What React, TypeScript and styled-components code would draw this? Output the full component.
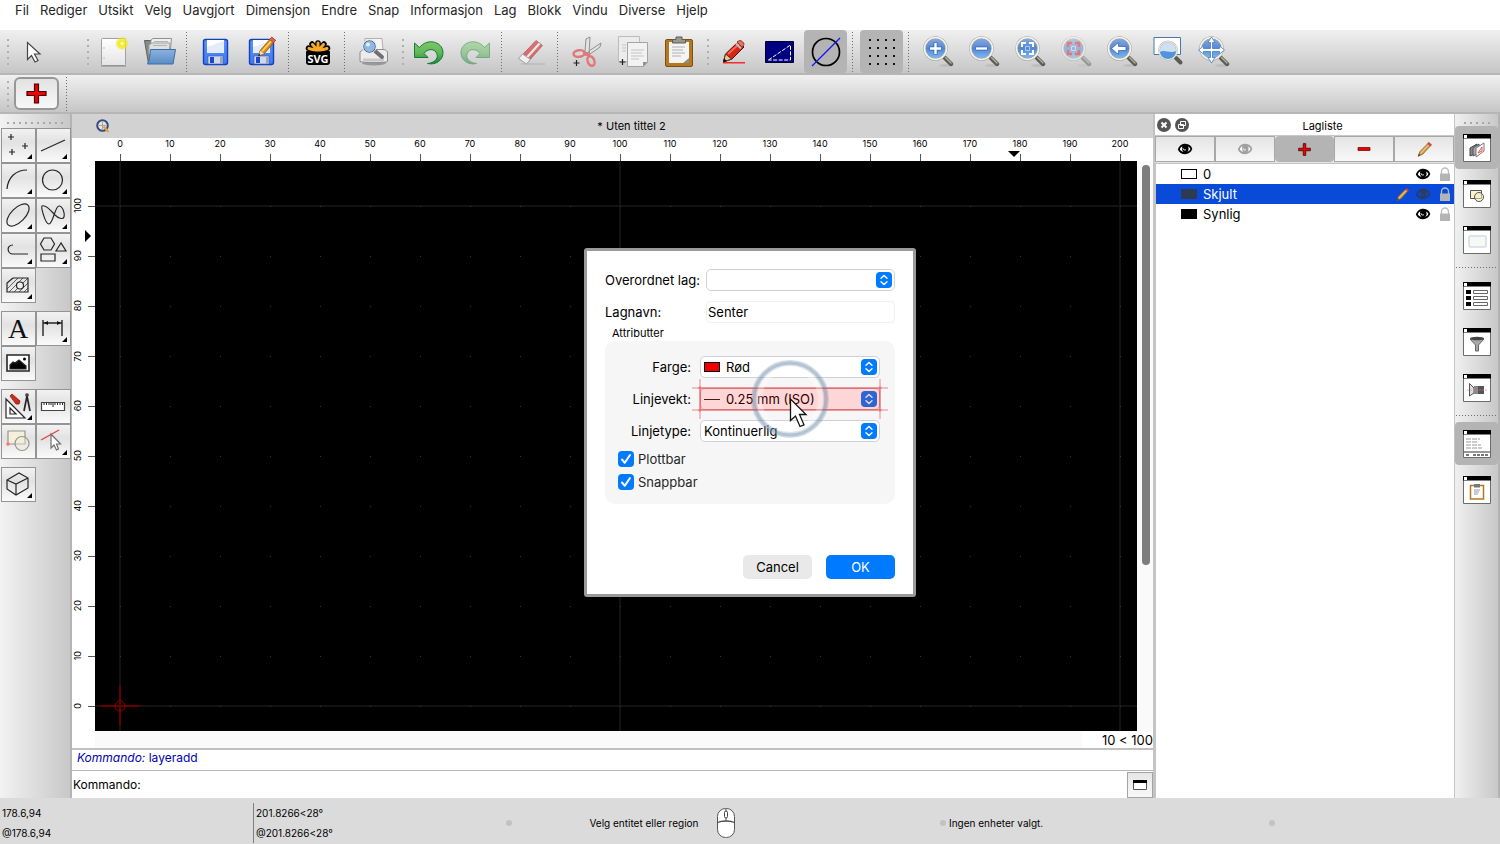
import React from "react";
import styled, { createGlobalStyle } from "styled-components";

const GlobalStyle = createGlobalStyle`
  * { box-sizing: border-box; }
  body {
    margin: 0;
    background: #fff;
    color: #000;
    font-family: Inter, "Liberation Sans", sans-serif;
    font-size: 13px;
    line-height: 16px;
  }
  button, input, select { font: inherit; color: inherit; margin: 0; }
  svg { display: block; flex: none; }
`;

/* ---------- Shell ---------- */

const Shell = styled.div`
  display: flex;
  flex-direction: column;
  min-height: 100vh;
`;

const MenuBar = styled.nav`
  display: flex;
  align-items: center;
  gap: 11px;
  height: 30px;
  padding: 0 15px 10px;
  background: #fff;
`;

const MenuButton = styled.button`
  padding: 0;
  border: 0;
  background: none;
  color: #262626;
  line-height: 20px;
`;

const ToolBar = styled.div<{ $height: number }>`
  display: flex;
  align-items: center;
  gap: 3px;
  height: ${(p) => p.$height}px;
  padding-left: 3px;
  background: linear-gradient(#f0f0f0, #c6c6c6);
  border-bottom: 2px solid #b6b6b6;
  overflow: hidden;
`;

const Grip = styled.span<{ $offset?: number }>`
  flex: none;
  width: 6px;
  height: 26px;
  margin-left: ${(p) => p.$offset ?? 0}px;
  background: repeating-linear-gradient(#b0b0b0 0 2px, transparent 2px 6px) right / 2px 100% no-repeat;
`;

const Divider = styled.span`
  flex: none;
  align-self: stretch;
  width: 7px;
  margin: 2px 0 1px;
  background: repeating-linear-gradient(#6e6e6e 0 1px, transparent 1px 3px) 2px 0 / 1px 100% no-repeat;
`;

const IconButton = styled.button<{ $active?: boolean }>`
  flex: none;
  display: flex;
  align-items: center;
  justify-content: center;
  width: 43px;
  height: 43px;
  padding: 0;
  border: 0;
  border-radius: 4px;
  background: ${(p) => (p.$active ? "#b4b4b4" : "none")};
`;

const FramedButton = styled(IconButton)`
  width: 45px;
  height: 33px;
  margin: 0 2px;
  border: 2px solid #979797;
  border-radius: 6px;
  background: linear-gradient(#e2e2e2, #f8f8f8);
`;

const Workspace = styled.main`
  flex: 1;
  display: flex;
  min-height: 0;
`;

/* ---------- Left tools ---------- */

const ToolPanel = styled.aside`
  flex: none;
  width: 72px;
  padding: 8px 1px 0;
  background: linear-gradient(90deg, #f2f2f2, #c8c8c8 97%, #b4b4b4 97%);
`;

const HorizontalGrip = styled.span<{ $width: number }>`
  display: block;
  width: ${(p) => p.$width}px;
  height: 2px;
  margin: 0 6px 4px;
  background: repeating-linear-gradient(90deg, #a8a8a8 0 2px, transparent 2px 6px);
`;

const ToolGroup = styled.div`
  display: grid;
  grid-template-columns: 35px 35px;
  grid-auto-rows: 35px;
  margin-bottom: 8px;
`;

const ToolButton = styled.button`
  position: relative;
  display: flex;
  align-items: center;
  justify-content: center;
  padding: 0;
  border: 1px solid #949494;
  background: linear-gradient(#f2f2f2, #e2e2e2 40%, #fafafa);
`;

const Corner = styled.span`
  position: absolute;
  right: 3px;
  bottom: 3px;
  border-left: 5px solid transparent;
  border-bottom: 5px solid #000;
`;

/* ---------- Document ---------- */

const DocumentPane = styled.section`
  flex: 1;
  min-width: 0;
  display: flex;
  flex-direction: column;
  border-right: 2px solid #c4c4c4;
`;

const DocumentTitle = styled.header`
  display: flex;
  align-items: center;
  height: 24px;
  padding-left: 24px;
  background: #d2d2d2;
`;

const TitleText = styled.h1`
  flex: 1;
  margin: 0;
  font-size: 11px;
  font-weight: 400;
  text-align: center;
`;

const TopRuler = styled.div`
  position: relative;
  display: flex;
  height: 23px;
  padding-left: 23px;
  background: #fff;
  overflow: hidden;
`;

const TopTick = styled.span`
  flex: none;
  display: flex;
  flex-direction: column;
  align-items: center;
  justify-content: space-between;
  width: 50px;
  font-size: 9px;
  line-height: 12px;
  &::after {
    content: "";
    width: 1px;
    height: 7px;
    margin-left: 1px;
    background: #555;
  }
`;

const DrawingRow = styled.div`
  flex: 1;
  display: flex;
  min-height: 0;
`;

const SideRuler = styled.div`
  position: relative;
  flex: none;
  display: flex;
  flex-direction: column;
  width: 23px;
  padding-top: 20px;
  background: #fff;
`;

const SideTick = styled.span`
  flex: none;
  display: flex;
  align-items: center;
  justify-content: space-between;
  height: 50px;
  font-size: 9px;
  line-height: 12px;
  &::after {
    content: "";
    width: 7px;
    height: 1px;
    margin-top: 1px;
    background: #555;
  }
`;

const SideLabel = styled.span`
  writing-mode: vertical-rl;
  rotate: 180deg;
`;

const TopMarker = styled.span`
  position: absolute;
  left: 936px;
  bottom: 4px;
  border: 6px solid transparent;
  border-bottom-width: 0;
  border-top-color: #000;
`;

const SideMarker = styled.span`
  position: absolute;
  top: 69px;
  right: 4px;
  border: 6px solid transparent;
  border-right-width: 0;
  border-left-color: #000;
`;

const Canvas = styled.div`
  position: relative;
  flex: 1;
  min-width: 0;
  background:
    linear-gradient(90deg, #121212 0 2px, transparent 2px) 24px 0 / 500px 100%,
    linear-gradient(#121212 0 2px, transparent 2px) 0 44px / 100% 500px,
    #000;
  overflow: hidden;
`;

const CanvasDrawing = styled.svg`
  position: absolute;
  inset: 0;
  width: 100%;
  height: 100%;
`;

const ScrollTrack = styled.div`
  flex: none;
  width: 16px;
  padding: 4px 3px 0 5px;
  background: #fafafa;
`;

const ScrollThumb = styled.div`
  height: calc(71% - 2px);
  border-radius: 4px;
  background: #7d7d7d;
`;

const CanvasFooter = styled.div`
  display: flex;
  justify-content: flex-end;
  height: 17px;
  margin-left: 23px;
  background: #fafafa;
`;

const GridInfo = styled.span`
  width: 71px;
  background: #fff;
  line-height: 18px;
  text-align: right;
`;

const CommandLog = styled.div`
  height: 23px;
  padding: 0 5px;
  border-top: 2px solid #c0c0c0;
  border-bottom: 1px solid #b8b8b8;
  color: #0000b4;
  font-size: 12px;
  line-height: 16px;
`;

const CommandRow = styled.div`
  display: flex;
  align-items: center;
  height: 27px;
  padding-left: 1px;
  font-size: 12px;
`;

const CommandInput = styled.input`
  flex: 1;
  min-width: 0;
  height: 24px;
  border: 0;
  outline: 0;
  background: transparent;
`;

const CommandButton = styled(IconButton)`
  width: 26px;
  height: 26px;
  border: 1px solid #a4a4a4;
  border-radius: 0;
  background: linear-gradient(#e6e6e6, #f8f8f8);
`;

/* ---------- Layer list ---------- */

const LayerPanel = styled.section`
  flex: none;
  display: flex;
  flex-direction: column;
  width: 300px;
  border-right: 1px solid #c4c4c4;
  background: #fff;
`;

const LayerHeader = styled.header`
  display: flex;
  align-items: center;
  gap: 4px;
  height: 21px;
  padding: 0 2px;
`;

const RoundButton = styled.button`
  display: flex;
  padding: 0;
  border: 0;
  background: none;
`;

const LayerTitle = styled.h2`
  flex: 1;
  margin: 2px 0 0;
  font-size: 11px;
  font-weight: 400;
  text-align: center;
`;

const LayerActions = styled.div`
  display: grid;
  grid-template-columns: repeat(5, 1fr);
  height: 28px;
  padding-bottom: 1px;
  border-top: 1px solid #c8c8c8;
  background: #e4e4e4;
`;

const LayerAction = styled.button<{ $active?: boolean }>`
  display: flex;
  align-items: center;
  justify-content: center;
  padding: 0;
  border: 1px solid ${(p) => (p.$active ? "#b4b4b4" : "#a8a8a8")};
  border-radius: ${(p) => (p.$active ? 4 : 0)}px;
  background: ${(p) => (p.$active ? "#b4b4b4" : "linear-gradient(#e4e4e4, #f8f8f8)")};
`;

const LayerRows = styled.ul`
  flex: 1;
  margin: 0;
  padding: 0;
  border-top: 1px solid #c4c4c4;
  border-left: 1px solid #c4c4c4;
  list-style: none;
`;

const LayerRow = styled.li<{ $selected?: boolean }>`
  display: flex;
  align-items: center;
  height: 20px;
  padding-left: 25px;
  background: ${(p) => (p.$selected ? "#094bd8" : "transparent")};
  color: ${(p) => (p.$selected ? "#fff" : "#000")};
`;

const Swatch = styled.span<{ $fill: string; $line?: string }>`
  flex: none;
  width: 16px;
  height: 10px;
  border: 1px solid ${(p) => p.$line ?? "#000"};
  background: ${(p) => p.$fill};
`;

const LayerName = styled.span`
  flex: 1;
  padding-left: 6px;
`;

const RowButton = styled.button<{ $width: number }>`
  display: flex;
  justify-content: center;
  width: ${(p) => p.$width}px;
  padding: 0;
  border: 0;
  background: none;
`;

/* ---------- Right dock ---------- */

const Dock = styled.aside`
  flex: none;
  display: flex;
  flex-direction: column;
  align-items: center;
  gap: 3px;
  width: 45px;
  padding: 8px 2px 0 0;
  background: linear-gradient(90deg, #f0f0f0, #c8c8c8 95%, #b4b4b4 95%);
`;

const DockGrip = styled(HorizontalGrip)`
  margin: 0 0 -1px;
`;

const DockDivider = styled.span`
  width: 41px;
  height: 7px;
  background: repeating-linear-gradient(90deg, #6e6e6e 0 1px, transparent 1px 3px) center / 100% 1px no-repeat;
`;

/* ---------- Status bar ---------- */

const StatusBar = styled.footer`
  display: grid;
  grid-template-columns: 253fr 253fr 434fr 329fr 231fr;
  align-items: center;
  height: 46px;
  padding-top: 3px;
  background: #dbdbdb;
  font-size: 10px;
  line-height: 20px;
`;

const Coordinates = styled.div<{ $divided?: boolean }>`
  height: 40px;
  padding-left: 2px;
  border-left: ${(p) => (p.$divided ? "1px solid #808080" : "0")};
`;

const StatusField = styled.div`
  display: flex;
  align-items: center;
  gap: 3px;
`;

const MouseHint = styled.div`
  flex: 1;
  display: grid;
  grid-template-columns: 1fr auto 1fr;
  align-items: center;
  gap: 18px;
  padding-right: 4px;
  text-align: right;
`;

const Dot = styled.span`
  flex: none;
  width: 6px;
  height: 6px;
  border-radius: 3px;
  background: #c2c2c2;
`;

/* ---------- Dialog ---------- */

const DialogLayer = styled.div`
  position: fixed;
  inset: 0;
  display: flex;
  align-items: center;
  justify-content: center;
`;

const Dialog = styled.form`
  width: 332px;
  padding: 18px 18px 15px;
  border: 3px solid #9a9a9a;
  border-radius: 3px;
  background: #fff;
`;

const Field = styled.div`
  display: flex;
  align-items: center;
  height: 22px;
  margin-bottom: 10px;
`;

const FieldLabel = styled.label<{ $width: number; $right?: boolean }>`
  flex: none;
  width: ${(p) => p.$width}px;
  padding-right: ${(p) => (p.$right ? 9 : 0)}px;
  text-align: ${(p) => (p.$right ? "right" : "left")};
  white-space: nowrap;
`;

const SelectBox = styled.span`
  position: relative;
  flex: 1;
  display: flex;
`;

const Select = styled.select<{ $icon?: boolean }>`
  appearance: none;
  width: 100%;
  height: 22px;
  padding: 0 28px 0 ${(p) => (p.$icon ? 25 : 3)}px;
  border: 1px solid #cdd2da;
  border-radius: 5px;
  background: #fff;
  outline: 0;
`;

const SelectMark = styled.span`
  position: absolute;
  top: 0;
  bottom: 0;
  left: 4px;
  display: flex;
  align-items: center;
  pointer-events: none;
`;

const SelectArrows = styled.span`
  position: absolute;
  top: 3px;
  right: 3px;
  pointer-events: none;
`;

const NameInput = styled.input`
  flex: 1;
  min-width: 0;
  height: 22px;
  padding: 0 1px;
  border: 1px solid #f0f0f0;
  border-radius: 4px;
  background: #fff;
  outline: 0;
`;

const Attributes = styled.fieldset`
  margin: -8px 0 0;
  padding: 0;
  border: 0;
`;

const Legend = styled.legend`
  padding: 0 7px;
  font-size: 11px;
`;

const AttributeCard = styled.div`
  padding: 15px 15px 14px 13px;
  border-radius: 10px;
  background: #f6f6f6;
`;

const CheckList = styled.div`
  display: grid;
  gap: 7px;
  margin-top: -1px;
`;

const CheckRow = styled.label`
  display: flex;
  align-items: center;
  gap: 4px;
  height: 16px;
  color: #262626;
`;

const CheckBoxFrame = styled.span`
  position: relative;
  display: flex;
`;

const CheckBox = styled.input`
  appearance: none;
  width: 16px;
  height: 16px;
  margin: 0;
  border-radius: 4px;
  background: #007aff;
`;

const CheckMark = styled.svg`
  position: absolute;
  inset: 0;
  pointer-events: none;
`;

const DialogActions = styled.div`
  display: flex;
  justify-content: flex-end;
  gap: 14px;
  margin-top: 51px;
`;

const DialogButton = styled.button<{ $primary?: boolean }>`
  width: 69px;
  height: 24px;
  padding: 0;
  border: 0;
  border-radius: 5px;
  background: ${(p) => (p.$primary ? "#007aff" : "#e9e9e9")};
  color: ${(p) => (p.$primary ? "#fff" : "#000")};
`;

const FocusMarker = styled.svg`
  position: absolute;
  z-index: 1;
  left: 50%;
  top: 50%;
  translate: -50% -50%;
  pointer-events: none;
`;

/* ---------- Icons ---------- */

type IconProps = { size?: number; children: React.ReactNode; box?: number; opacity?: number };
const Icon = ({ size = 32, box, children, opacity }: IconProps) => (
  <svg width={size} height={size} viewBox={`0 0 ${box ?? size} ${box ?? size}`} fill="none" opacity={opacity} aria-hidden="true">
    {children}
  </svg>
);

const HiddenSvg = styled.svg`
  position: absolute;
`;

const Defs = () => (
  <HiddenSvg width="0" height="0" aria-hidden="true">
    <defs>
      <radialGradient id="glow">
        <stop offset="0" stopColor="#fffff0" />
        <stop offset=".35" stopColor="#f4ec20" />
        <stop offset=".7" stopColor="#f0e820" stopOpacity=".7" />
        <stop offset="1" stopColor="#f0e820" stopOpacity="0" />
      </radialGradient>
      <linearGradient id="paper" x2="0" y2="1">
        <stop stopColor="#fff" />
        <stop offset="1" stopColor="#e4e4e4" />
      </linearGradient>
      <linearGradient id="folder" x2="0" y2="1">
        <stop stopColor="#8cb2de" />
        <stop offset="1" stopColor="#5a8cc4" />
      </linearGradient>
      <linearGradient id="disk" x2="0" y2="1">
        <stop stopColor="#5c94f4" />
        <stop offset="1" stopColor="#4078f0" />
      </linearGradient>
      <linearGradient id="lens" x2="0" y2="1">
        <stop stopColor="#8cace0" />
        <stop offset=".5" stopColor="#5488d4" />
        <stop offset="1" stopColor="#80c0f8" />
      </linearGradient>
      <linearGradient id="green" x2="0" y2="1">
        <stop stopColor="#7cc868" />
        <stop offset=".5" stopColor="#60b858" />
        <stop offset="1" stopColor="#10883c" />
      </linearGradient>
    </defs>
  </HiddenSvg>
);

const Pointer = () => (
  <path d="M9.500 6.500v17l4-4 3.500 6.500 3-1.500-3.500-6.500H22Z" fill="#fff" stroke="#444" strokeWidth="1.200" />
);

const DiskShape = () => (
  <>
    <rect x="3.500" y="3.500" width="24" height="25" rx="2" fill="url(#disk)" stroke="#1440c0" strokeWidth="1.400" />
    <rect x="7" y="4" width="17" height="13" fill="#fff" />
    <path d="M7 17V11L24 5v12Z" fill="#e4ecfa" />
    <path d="M8 28v-8h15v8Z" fill="#d4d8e4" stroke="#3058c8" strokeWidth=".6" />
    <rect x="10" y="21" width="4" height="6" fill="#1848c8" />
    <path d="M20 21h3v7h-3Z" fill="#98a4c0" />
  </>
);

const UndoShape = () => (
  <path
    d="M1.500 9V23.500H15L11 19.500C14 14.500 22 14 24 20C25.500 25 21 29 14.500 29.500C23 31.500 30.500 26 30 18C29 7 14 4 6.500 13.500Z"
    fill="url(#green)" stroke="#187c34" strokeWidth="1"
  />
);

const ZoomShape = ({ children, muted }: { children: React.ReactNode; muted?: boolean }) => (
  <Icon opacity={muted ? 0.5 : 1}>
    <ellipse cx="24" cy="29.500" rx="7" ry="1.500" fill="#000" opacity=".08" />
    <path d="m20 19 3 3" stroke="#a8a8a0" strokeWidth="2" />
    <path d="m23 22 6 6" stroke="#5c5c54" strokeWidth="4.400" strokeLinecap="round" />
    <path d="m23.500 21.500 5.500 5.500" stroke="#b0b0a4" strokeWidth="1.400" strokeLinecap="round" />
    <circle cx="13.500" cy="12.500" r="11" fill="url(#lens)" stroke="#a8a8a0" strokeWidth="2.600" />
    <circle cx="13.500" cy="12.500" r="11" stroke="#f4f4ec" strokeWidth="1.600" />
    {children}
  </Icon>
);

const PencilShape = () => (
  <>
    <path d="m7 28 3-8L25 3l5 4-15 18Z" fill="#e08818" stroke="#884c08" />
    <path d="m12 22 15-17" stroke="#fcd458" strokeWidth="2.500" />
    <path d="m22 6 3-3 5 4-3 3Z" fill="#e86050" stroke="#9c4038" />
    <path d="m7 28 3-8 5 5Z" fill="#f8dca8" stroke="#946c40" strokeWidth=".7" />
    <path d="m7 28 1-3 2 2Z" fill="#000" />
  </>
);

const Eye = ({ color = "#000", shine = "#fff" }: { color?: string; shine?: string }) => (
  <svg width="16" height="12" viewBox="0 0 16 12" fill="none" aria-hidden="true">
    <path d="M.8 6.400C2.400 2.200 5 .7 8.400.7c3.600 0 6 2.100 6.900 5.300-1.300 3.200-3.800 5.200-7.300 5.200C4.500 11.200 2.300 9.500.8 6.400Z" fill={color} />
    <path d="M2.800 6.300C3.400 4.700 4.400 3.700 5.400 3.300 4.600 5.500 5 7.600 6.600 9 4.800 8.700 3.600 7.800 2.800 6.300ZM10.300 8.900c1.300-1.300 1.700-3.500.8-5.400 1.300.7 2 1.500 2.300 2.600-.6 1.300-1.700 2.300-3.100 2.800Z" fill={shine} />
    <path d="M5.900 5.200c.4 1.700 1.500 2.200 3 1.600" stroke={shine} strokeWidth="1" />
  </svg>
);

const Lock = () => (
  <svg width="12" height="14" viewBox="0 0 12 14" fill="none" aria-hidden="true">
    <path d="M2.500 7V4.500a3.500 3.500 0 0 1 7 0V7" stroke="#b8bcc4" strokeWidth="1.300" />
    <path d="M1 6.500h10V14H1Z" fill="#b4b4b4" />
  </svg>
);

const SmallPencil = ({ size = 20 }: { size?: number }) => (
  <Icon size={size} box={20}>
    <path d="m2.500 18 2-5.500L14.500 2.500l3 2.500L8 15.500Z" fill="#d49a48" stroke="#80602c" strokeWidth=".9" />
    <path d="m5.500 14.500 10-10.500" stroke="#f4cc7c" strokeWidth="1.200" />
    <path d="m13.500 3.500 1.500-2 3.500 3-1.500 1.500Z" fill="#e04840" stroke="#a84034" strokeWidth=".6" />
    <path d="m2.500 18 1-3L5 16.500Z" fill="#403020" />
  </Icon>
);

const Cross = ({ size }: { size: number }) => (
  <Icon size={size} box={21}>
    <path d="M8.500 1h4v7.500H20v4h-7.500V20h-4v-7.500H1v-4h7.500Z" fill="#f00000" stroke="#400000" strokeWidth="1.200" />
  </Icon>
);

const ToolIcon = ({ children }: { children: React.ReactNode }) => (
  <svg width="33" height="33" viewBox="0 0 33 33" fill="none" stroke="#262626" strokeWidth="1.200" aria-hidden="true">
    {children}
  </svg>
);

const Arrows = () => (
  <svg width="16" height="16" viewBox="0 0 16 16" fill="none" aria-hidden="true">
    <rect width="16" height="16" rx="4" fill="#007aff" />
    <path d="m5 6.300 3-2.800 3 2.800M5 9.700l3 2.800 3-2.800" stroke="#fff" strokeWidth="1.400" strokeLinecap="round" strokeLinejoin="round" />
  </svg>
);

const DockIcon = ({ children }: { children: React.ReactNode }) => (
  <Icon size={28}>
    <path d="M.500.500h27v27H.500Z" fill="#fff" stroke="#6c6c6c" />
    <path d="M0 0h28v4.500H0Z" fill="#000" />
    <path d="M1 1h3v3H1Z" fill="#fff" />
    {children}
  </Icon>
);

const Clipboard = ({ size = 32 }: { size?: number }) => (
  <Icon size={size} box={32}>
    <rect x="2.500" y="3.500" width="27" height="27" rx="1.500" fill="#b47820" stroke="#7c5010" />
    <path d="M6 6h20v21H6Z" fill="#f4f4f4" />
    <path d="M26 22v5h-6Z" fill="#8c8c8c" />
    <path d="M9 11h13M9 14h11M9 17h13M9 20h9" stroke="#b0b0b0" />
    <path d="M9.500 7V3.500H13V1h6v2.500h3.500V7Z" fill="#98988c" stroke="#5c5c54" />
  </Icon>
);

/* ---------- Toolbar contents ---------- */

type Tool = { label: string; icon: React.ReactNode; active?: boolean };
type ToolbarEntry = Tool | "divider" | "grip";

const toolbar: ToolbarEntry[] = [
  {
    label: "Ny",
    icon: (
      <Icon>
        <rect x="3.500" y="2.500" width="24" height="27" rx="1" fill="url(#paper)" stroke="#a0a0a0" />
        <path d="M3 30h25" stroke="#888" />
        <path d="M5 12h2M5 22h2" stroke="#c0c0c0" />
        <circle cx="24" cy="7.500" r="7" fill="url(#glow)" />
      </Icon>
    ),
  },
  {
    label: "Åpne",
    icon: (
      <Icon>
        <path d="M.500 4.500h8l2 3v20H4.500Z" fill="#888c88" stroke="#5c605c" />
        <path d="m7 4 2-1.500h18.500L26 18H6Z" fill="#f0f0f0" stroke="#909090" />
        <path d="m5 9 3-2h18l-1 11H5Z" fill="#e0e0e0" stroke="#a0a0a0" />
        <path d="M10 5.500h14M9 9.500h14" stroke="#b4b4b4" />
        <path d="M6.500 13.500h25L29 28H3.500c2-3 2.500-9 3-14.500Z" fill="url(#folder)" stroke="#3c6ca4" />
      </Icon>
    ),
  },
  "divider",
  { label: "Lagre", icon: <Icon><DiskShape /></Icon> },
  {
    label: "Lagre som",
    icon: (
      <Icon>
        <DiskShape />
        <g transform="translate(7 -1) scale(.75)"><PencilShape /></g>
      </Icon>
    ),
  },
  "divider",
  {
    label: "SVG",
    icon: (
      <Icon>
        <path d="M16 15 6.500 12M16 15 10 8M16 15V7M16 15l6-7M16 15l9.500-3" stroke="#000" strokeWidth="5.500" strokeLinecap="round" />
        <rect x="4" y="14" width="24" height="15" rx="3" fill="#000" />
        <path d="M16 15 7 12.500M16 15 10.500 8.500M16 15V7M16 15l5.500-6.500M16 15l9-2.500" stroke="#f8a828" strokeWidth="3" strokeLinecap="round" />
        <path d="M4 15.500h24V27H4Z" fill="#000" />
        <text x="16" y="27" fill="#fff" fontFamily="Open Sans, sans-serif" fontSize="11" fontWeight="700" textAnchor="middle">SVG</text>
      </Icon>
    ),
  },
  "divider",
  {
    label: "Forhåndsvis",
    icon: (
      <Icon>
        <ellipse cx="16" cy="27" rx="12" ry="2.500" fill="#777" opacity=".6" />
        <path d="M7 2.500h17l1 12H6Z" fill="#f4f4f4" stroke="#b0b0b0" />
        <path d="M2 16c2-2 3-2.500 5-2.500h18c2 0 3 .5 4.500 2.500v9.500c-4 1.500-23 1.500-27.500 0Z" fill="#ececec" stroke="#8c8c8c" />
        <path d="M5 22.500h21v3H5Z" fill="#c8c8c8" />
        <path d="m17 15 7 6" stroke="#707070" strokeWidth="4" strokeLinecap="round" />
        <circle cx="11.500" cy="10.500" r="6" fill="#90b8e4" stroke="#3c5c88" strokeWidth="1" />
        <circle cx="11.500" cy="10.500" r="6.800" stroke="#ece8e0" />
        <circle cx="10" cy="8.500" r="2" fill="#e4f0ff" />
      </Icon>
    ),
  },
  "grip",
  { label: "Angre", icon: <Icon><g transform="translate(0 -2)"><UndoShape /></g></Icon> },
  { label: "Gjenta", icon: <Icon opacity={0.5}><g transform="matrix(-1 0 0 1 32 -2)"><UndoShape /></g></Icon> },
  "divider",
  {
    label: "Slett",
    icon: (
      <Icon opacity={0.65}>
        <path d="M6 28h24" stroke="#888" opacity=".4" strokeWidth="1.500" />
        <path d="m4 22.500 17-18 6.500 5L12 27Z" fill="#d83438" stroke="#983838" />
        <path d="m10.500 23 14-15.500" stroke="#f8f0ee" strokeWidth="2.200" />
        <path d="m3.500 22.500 4-4.500 8 5.500-4 4.500Z" fill="#fff" stroke="#888" />
      </Icon>
    ),
  },
  "divider",
  {
    label: "Klipp ut",
    icon: (
      <Icon>
        <path d="m14 16 1-13 4-2-1 16ZM18 15l12-8-1 4-10 7Z" fill="#e4e4e4" stroke="#909090" />
        <ellipse cx="8" cy="17.500" rx="5.500" ry="3.300" stroke="#e07878" strokeWidth="2.500" transform="rotate(-8 8 17.500)" />
        <ellipse cx="20" cy="25" rx="3.300" ry="5" stroke="#e07878" strokeWidth="2.500" transform="rotate(-22 20 25)" />
        <path d="m13 18 6 1" stroke="#e07878" strokeWidth="3" />
        <path d="M5.500 24v6M2.500 27h6" stroke="#222" strokeWidth="1.200" />
      </Icon>
    ),
  },
  {
    label: "Kopier",
    icon: (
      <Icon>
        <path d="M1.500.500h21v25h-21Z" fill="#ececec" stroke="#bcbcbc" />
        <path d="M10.500 6.500h20v20l-4 4h-16Z" fill="#f2f2f2" stroke="#a4a4a4" />
        <path d="M26 30.500V26h4.500Z" fill="#909090" />
        <path d="M14 14h13M14 17h11M14 20h13M14 23h8M5 9h4M5 12h4M5 15h4" stroke="#c4c4c4" />
        <path d="M5.500 23v6M2.500 26h6" stroke="#222" strokeWidth="1.200" />
      </Icon>
    ),
  },
  { label: "Lim inn", icon: <Clipboard /> },
  "grip",
  {
    label: "Penn",
    icon: (
      <Icon>
        <path d="m5.500 26 2-8L20 6l6 5-12 12Z" fill="#d82418" stroke="#501008" />
        <path d="M10 18 21 8" stroke="#fc6850" strokeWidth="2" />
        <path d="m19 6 2.500-1.500c2 0 4.500 2 4.500 4L24 11Z" fill="#f07060" stroke="#804038" />
        <path d="m18 7.500 5 5" stroke="#c0c0c0" strokeWidth="2" />
        <path d="m5.500 26 2-8 6 5Z" fill="#e8c898" stroke="#503818" />
        <path d="m5 26.500 1-4 3 2.500Z" fill="#111" />
        <path d="M5 26.800h22" stroke="red" strokeWidth="1.200" />
      </Icon>
    ),
  },
  {
    label: "Utkastmodus",
    icon: (
      <Icon>
        <path d="M1.500 5.500h28v21h-28Z" fill="#000080" stroke="#000030" />
        <path d="M4.500 24 26.500 9v15Z" stroke="#fff" strokeDasharray="4 1.500" />
      </Icon>
    ),
  },
  {
    label: "Antialiasering",
    active: true,
    icon: (
      <Icon>
        <circle cx="16" cy="16" r="13.500" stroke="#000" strokeWidth="1.700" />
        <path d="M2 30 30 2" stroke="#1414f0" strokeWidth="1.200" />
      </Icon>
    ),
  },
  "divider",
  {
    label: "Rutenett",
    active: true,
    icon: (
      <Icon>
        {[4, 12, 20, 28].map((y) => (
          <path key={y} d={`M3 ${y}h26`} stroke="#111" strokeWidth="2" strokeDasharray="2 6" />
        ))}
      </Icon>
    ),
  },
  "divider",
  { label: "Zoom inn", icon: <ZoomShape><path d="M13.500 6.500v12M7.500 12.500h12" stroke="#3c68a8" strokeWidth="4" /><path d="M13.500 7v11M8 12.500h11" stroke="#fff" strokeWidth="2.400" /></ZoomShape> },
  { label: "Zoom ut", icon: <ZoomShape><path d="M7.500 12.500h12" stroke="#3c68a8" strokeWidth="4" /><path d="M8 12.500h11" stroke="#fff" strokeWidth="2.400" /></ZoomShape> },
  { label: "Autozoom", icon: <ZoomShape><path d="M8 11V7h4M15 7h4v4M19 14v4h-4M12 18H8v-4" stroke="#fff" strokeWidth="2" /><path d="M11.500 10.500h4v4h-4Z" stroke="#a8c8ec" /></ZoomShape> },
  { label: "Zoom til utvalg", icon: <ZoomShape muted><path d="M8 11V7h4M15 7h4v4M19 14v4h-4M12 18H8v-4" stroke="#e81414" strokeWidth="2.600" /><path d="M11.500 10.500h4v4h-4Z" stroke="#c8dcf4" /></ZoomShape> },
  { label: "Forrige visning", icon: <ZoomShape><path d="m5.500 12.500 7-6v4H20v4h-7.500v4Z" fill="#fff" stroke="#3c68a8" strokeWidth=".8" /></ZoomShape> },
  {
    label: "Vinduszoom",
    icon: (
      <Icon>
        <path d="M2 1.500h26.500v17H2Z" fill="#fff" stroke="#4878b4" />
        <path d="m24 22 4.500 4.500" stroke="#5c5c54" strokeWidth="4" strokeLinecap="round" />
        <circle cx="16" cy="14.500" r="9" fill="#d0e0f4" stroke="#b4b8b4" strokeWidth="1.800" />
        <path d="M8 16c4-3 10 2 16-1-1 11-15 11-16 1Z" fill="#5094dc" />
        <circle cx="16" cy="14.500" r="9" stroke="#f0f0e8" />
      </Icon>
    ),
  },
  {
    label: "Panorer",
    icon: (
      <ZoomShape>
        <path d="M14.500 12.500h7v-2.500l5 4-5 4v-2.500h-7v6H17L13.500 27 10 21.500h2.500v-6h-7V18l-5-4 5-4v2.500h7v-6H10L13.500 1 17 6.500h-2.500Z" fill="#fff" stroke="#5484c4" strokeWidth=".9" />
      </ZoomShape>
    ),
  },
];

const drawTools: (Tool & { more?: boolean })[][] = [
  [
    { label: "Punkt", more: true, icon: <ToolIcon><path d="M9 5v6M6 8h6M10 20v6M7 23h6M23 14v6M20 17h6" /></ToolIcon> },
    { label: "Linje", more: true, icon: <ToolIcon><path d="M4 22 28 11" /></ToolIcon> },
    { label: "Bue", more: true, icon: <ToolIcon><path d="M5 25C6 13 14 6 25 6" /></ToolIcon> },
    { label: "Sirkel", more: true, icon: <ToolIcon><circle cx="15.500" cy="16" r="10" /></ToolIcon> },
    { label: "Ellipse", more: true, icon: <ToolIcon><ellipse cx="16" cy="16" rx="14" ry="7" transform="rotate(-45 16 16)" /></ToolIcon> },
    { label: "Spline", more: true, icon: <ToolIcon><path d="M5 7c4-2 10 6 13 9s8 5 9 2-1-11-5-11-6 18-10 18S4 8 5 7Z" /></ToolIcon> },
    { label: "Polylinje", more: true, icon: <ToolIcon><path d="M11 11c-7 0-6 9 0 9h15" /></ToolIcon> },
    { label: "Former", more: true, icon: <ToolIcon><path d="m7 4-3.500 6L7 16h7l3.500-6L14 4ZM24 9l-5 8h10ZM4 20h14v7H4Z" /></ToolIcon> },
    {
      label: "Skravering", more: true,
      icon: <ToolIcon><path d="m11 9-6 5v9h21V9Z" /><path d="m5 20 11-11M7 23 21 9M12 23l14-14M17 23l9-9M22 23l4-4" strokeWidth=".7" /><circle cx="18" cy="16.500" r="3.500" fill="#f0f0f0" /></ToolIcon>,
    },
  ],
  [
    { label: "Tekst", icon: <ToolIcon><text x="16" y="26" stroke="none" fill="#111" fontFamily="Liberation Serif, serif" fontSize="28" textAnchor="middle">A</text></ToolIcon> },
    { label: "Dimensjon", more: true, icon: <ToolIcon><path d="M6 8v16M25 8v16M6 11h19" strokeWidth="1.400" /><path d="m7 11 4-2v4ZM24 11l-4-2v4Z" fill="#111" stroke="none" /></ToolIcon> },
    { label: "Bilde", icon: <ToolIcon><path d="M5 8h22v16H5Z" fill="#fff" strokeWidth="1.600" /><path d="M8 22v-4l3-3 2 1 4-3 7 6v3Z" fill="#000" /><circle cx="22.500" cy="12" r="1.500" fill="#000" stroke="none" /></ToolIcon> },
  ],
  [
    {
      label: "Endre", more: true,
      icon: <ToolIcon><path d="M4 9v19h19ZM8 18v6h6Z" fill="#fff" /><path d="m8 6 2-2 8 7-1 3-3 0Z" fill="#d8281c" stroke="#6c2418" strokeWidth=".8" /><path d="m25 6-3 15M25 6l3 15M24 10h2" strokeWidth="1.700" /><circle cx="25" cy="5" r="1.200" /></ToolIcon>,
    },
    { label: "Mål", icon: <ToolIcon><path d="M4.500 12.500h23v8h-23Z" fill="#fff" stroke="#444" /><path d="M7 13v2M9.500 13v2M12 13v2M14 13v2M16 13v4M18 13v2M20.500 13v2M23 13v2M25.500 13v2" strokeWidth="1" /></ToolIcon> },
    { label: "Blokk", icon: <ToolIcon><g stroke="#969690"><path d="M6 6h17v13H6Z" fill="#f4f0dc" /><circle cx="20" cy="18.500" r="7" fill="#f2ecd466" /></g><circle cx="6" cy="19" r="1.200" fill="#fc7878" stroke="#fc7878" /></ToolIcon> },
    { label: "Velg entitet", more: true, icon: <ToolIcon><path d="M4 15 22 5" stroke="#f03838" /><path d="M14 9v14l3-3 2.500 5 2-1-2-5h4Z" fill="#fff" stroke="#707070" /></ToolIcon> },
  ],
  [{ label: "3D", more: true, icon: <ToolIcon><path d="M5 12 17 5l9 5v10l-12 7-9-6ZM5 12l9 4 12-6M14 16v11" /></ToolIcon> }],
];

const dock: (Tool | "divider")[] = [
  { label: "Lagliste", active: true, icon: <DockIcon><path d="m7 14 7-4v9l-7 3Z" fill="#888" stroke="#444" /><path d="m10 14 6-4v9l-6 3Z" fill="#aaa" stroke="#555" /><path d="m13 14 8-5v8l-8 6Z" fill="#fff" stroke="#777" /><path d="m15 19 4-6v4Z" stroke="#f05050" /></DockIcon> },
  { label: "Blokkliste", icon: <DockIcon><path d="M7.500 10.500h11v8h-11Z" fill="#fbf2d0" stroke="#555" /><circle cx="16" cy="17" r="4.500" fill="#f8ecc088" stroke="#555" /></DockIcon> },
  { label: "Visninger", icon: <DockIcon><rect x="6" y="10" width="17" height="11" rx="1.500" fill="#f8f8f4" stroke="#d0dcea" strokeWidth="1.500" /></DockIcon> },
  "divider",
  { label: "Egenskaper", icon: <DockIcon><path d="M3 10h5M3 16h5M3 22h5" stroke="#000" strokeWidth="4" /><path d="M10.500 8.500h14v3h-14ZM10.500 14.500h14v3h-14ZM10.500 20.500h14v3h-14Z" stroke="#666" /></DockIcon> },
  { label: "Filter", icon: <DockIcon><path d="m7 11 5.500 6v6h3v-6l5.500-6Z" fill="#a8a8a8" stroke="#666" /><ellipse cx="14" cy="10.500" rx="7" ry="1.700" fill="#444" /></DockIcon> },
  { label: "Projeksjon", icon: <DockIcon><path d="M6.500 9.500 11 14v5l-4.500 3Z" fill="#ddd" stroke="#555" /><path d="M11 12h10v8H11Z" fill="#888" /><path d="M15 12h6v8h-6Z" fill="#555" /><path d="M4 16h20" stroke="#f07878" strokeOpacity=".6" strokeDasharray="2 1" /></DockIcon> },
  "divider",
  { label: "Kommandolinje", active: true, icon: <DockIcon><path d="M3 9h14M3 12h12M3 15h15M3 18h16" stroke="#999" strokeDasharray="5 1" /><path d="M1 22h26" stroke="#333" /><path d="M3 25h3M10 25h15" stroke="#777" strokeWidth="2" strokeDasharray="3 1" /></DockIcon> },
  { label: "Utklippstavle", icon: <DockIcon><g transform="translate(6 7) scale(.5)"><path d="M3 5h26v27H3Z" fill="#fff" stroke="#b47820" strokeWidth="3" /><path d="M10 14h12M10 18h10M10 22h8" stroke="#999" strokeWidth="2" /><path d="M10 2h12v7H10Z" fill="#777" /></g></DockIcon> },
];

const menus = ["Fil", "Rediger", "Utsikt", "Velg", "Uavgjort", "Dimensjon", "Endre", "Snap", "Informasjon", "Lag", "Blokk", "Vindu", "Diverse", "Hjelp"];

const layers = [
  { name: "0", fill: "#fff" },
  { name: "Skjult", fill: "#2e3a4e", line: "#2e3a4e", selected: true, eye: "#2c3c60", shine: "#094bd8" },
  { name: "Synlig", fill: "#000" },
];

const horizontalMarks = Array.from({ length: 21 }, (_, i) => i * 10);
const verticalMarks = Array.from({ length: 11 }, (_, i) => 100 - i * 10);

const AttributeSelect = ({ id, label, value, mark }: { id: string; label: string; value: string; mark?: React.ReactNode }) => (
  <Field>
    <FieldLabel htmlFor={id} $width={82} $right>{label}</FieldLabel>
    <SelectBox>
      <Select id={id} $icon={!!mark} defaultValue={value}><option>{value}</option></Select>
      {mark && <SelectMark>{mark}</SelectMark>}
      <SelectArrows><Arrows /></SelectArrows>
      {id === "weight" && <WeightFocus />}
    </SelectBox>
  </Field>
);

const WeightFocus = () => (
  <FocusMarker width="200" height="80" viewBox="0 0 200 80" fill="none" aria-hidden="true">
    <path d="M10 29h180v22H10Z" fill="#ff0000" fillOpacity=".16" />
    <path d="M2 29h196M2 51h196M10 20v40M190 20v40" stroke="#e02020" strokeOpacity=".25" strokeWidth="2" />
    <path d="M8 29h184M8 51h184M10 27v26M190 27v26" stroke="#e03030" strokeOpacity=".55" />
    <circle cx="100" cy="40" r="36" stroke="#6c8caa" strokeOpacity=".3" strokeWidth="6" />
    <circle cx="100" cy="40" r="36" stroke="#6c8caa" strokeOpacity=".3" strokeWidth="3" />
    <circle cx="100" cy="40" r="31" stroke="#fff" strokeOpacity=".3" strokeWidth="6" />
    <path d="M100.500 40v21.500l5-4.500 4.500 10.500 4-1.700-4.500-10.300h6.500Z" fill="#fff" stroke="#111" strokeWidth="1.300" />
  </FocusMarker>
);

const CheckField = ({ label }: { label: string }) => (
  <CheckRow>
    <CheckBoxFrame>
      <CheckBox type="checkbox" defaultChecked />
      <CheckMark width="16" height="16" viewBox="0 0 16 16" fill="none">
        <path d="m4 8.500 2.800 3.300L12 4" stroke="#fff" strokeWidth="2" strokeLinecap="round" strokeLinejoin="round" />
      </CheckMark>
    </CheckBoxFrame>
    {label}
  </CheckRow>
);

export default function App() {
  return (
    <Shell>
      <GlobalStyle />
      <Defs />
      <MenuBar>
        {menus.map((m) => <MenuButton key={m}>{m}</MenuButton>)}
      </MenuBar>

      <ToolBar $height={45}>
        <Grip />
        <IconButton aria-label="Velg"><Icon><Pointer /></Icon></IconButton>
        <Grip $offset={25} />
        {toolbar.map((t, i) => {
          if (t === "divider") return <Divider key={i} />;
          if (t === "grip") return <Grip key={i} />;
          return <IconButton key={i} aria-label={t.label} $active={t.active}>{t.icon}</IconButton>;
        })}
      </ToolBar>
      <ToolBar $height={39}>
        <Grip />
        <FramedButton aria-label="Legg til lag"><Cross size={21} /></FramedButton>
        <Divider />
      </ToolBar>

      <Workspace>
        <ToolPanel>
          <HorizontalGrip $width={56} />
          {drawTools.map((group, i) => (
            <ToolGroup key={i}>
              {group.map((t) => (
                <ToolButton key={t.label} aria-label={t.label}>{t.icon}{t.more && <Corner />}</ToolButton>
              ))}
            </ToolGroup>
          ))}
        </ToolPanel>

        <DocumentPane>
          <DocumentTitle>
            <Icon size={14}>
              <circle cx="6.500" cy="6.500" r="5.300" fill="#e8e4dc" stroke="#344c84" strokeWidth="2" />
              <path d="M6.500 3v7M3 6.500h7" stroke="#a8a4a0" />
              <path d="m7.500 7.500 5 5.500" stroke="#e8a03c" strokeWidth="2" />
            </Icon>
            <TitleText>* Uten tittel 2</TitleText>
          </DocumentTitle>
          <TopRuler>
            {horizontalMarks.map((n) => <TopTick key={n}>{n}</TopTick>)}
            <TopMarker />
          </TopRuler>
          <DrawingRow>
            <SideRuler>
              {verticalMarks.map((n) => <SideTick key={n}><SideLabel>{n}</SideLabel></SideTick>)}
              <SideMarker />
            </SideRuler>
            <Canvas>
              <CanvasDrawing aria-hidden="true">
                <defs>
                  <pattern id="dots" x="25" y="45" width="50" height="50" patternUnits="userSpaceOnUse">
                    <rect width="1" height="1" fill="#383838" />
                  </pattern>
                </defs>
                <rect width="100%" height="100%" fill="url(#dots)" />
                <path d="M5 545h40M25 525v40" stroke="#640000" strokeWidth="2" />
                <circle cx="25" cy="545" r="5" fill="none" stroke="#8c0000" />
              </CanvasDrawing>
            </Canvas>
            <ScrollTrack><ScrollThumb /></ScrollTrack>
          </DrawingRow>
          <CanvasFooter><GridInfo>10 &lt; 100</GridInfo></CanvasFooter>
          <CommandLog><em>Kommando:</em> layeradd</CommandLog>
          <CommandRow>
            <label htmlFor="command">Kommando:</label>
            <CommandInput id="command" />
            <CommandButton aria-label="Vis kommandovindu">
              <Icon size={14}><path d="M.500 2.500h13v9H.500Z" fill="#fff" stroke="#555" /><path d="M0 2h14v3H0Z" fill="#000" /></Icon>
            </CommandButton>
          </CommandRow>
        </DocumentPane>

        <LayerPanel>
          <LayerHeader>
            <RoundButton aria-label="Lukk">
              <Icon size={14}><circle cx="7" cy="7" r="7" fill="#555" /><path d="m4.500 4.500 5 5M9.500 4.500l-5 5" stroke="#fff" strokeWidth="2" /></Icon>
            </RoundButton>
            <RoundButton aria-label="Løsne">
              <Icon size={14}><circle cx="7" cy="7" r="7" fill="#555" /><path d="M5.500 3.500h5v4h-5ZM3.500 6.500h5v4h-5Z" fill="#555" stroke="#fff" /></Icon>
            </RoundButton>
            <LayerTitle>Lagliste</LayerTitle>
          </LayerHeader>
          <LayerActions>
            <LayerAction aria-label="Vis alle"><Eye /></LayerAction>
            <LayerAction aria-label="Skjul alle"><Eye color="#a0a0a0" /></LayerAction>
            <LayerAction aria-label="Legg til" $active><Cross size={13} /></LayerAction>
            <LayerAction aria-label="Fjern">
              <Icon size={14}><path d="M1 5.500h12v3H1Z" fill="#f00000" stroke="#701010" strokeWidth=".8" /></Icon>
            </LayerAction>
            <LayerAction aria-label="Rediger"><SmallPencil size={17} /></LayerAction>
          </LayerActions>
          <LayerRows>
            {layers.map((l) => (
              <LayerRow key={l.name} $selected={l.selected}>
                <Swatch $fill={l.fill} $line={l.line} />
                <LayerName>{l.name}</LayerName>
                {l.selected && <SmallPencil size={15} />}
                <RowButton $width={26} aria-label={`Synlighet ${l.name}`}><Eye color={l.eye} shine={l.shine} /></RowButton>
                <RowButton $width={18} aria-label={`Lås ${l.name}`}><Lock /></RowButton>
              </LayerRow>
            ))}
          </LayerRows>
        </LayerPanel>

        <Dock>
          <DockGrip $width={26} />
          {dock.map((t, i) =>
            t === "divider" ? <DockDivider key={i} /> : <IconButton key={i} aria-label={t.label} $active={t.active}>{t.icon}</IconButton>
          )}
        </Dock>
      </Workspace>

      <StatusBar>
        <Coordinates><div>178.6,94</div><div>@178.6,94</div></Coordinates>
        <Coordinates $divided><div>201.8266&lt;28°</div><div>@201.8266&lt;28°</div></Coordinates>
        <StatusField>
          <Dot />
          <MouseHint>
            <span>Velg entitet eller region</span>
            <svg width="18" height="30" viewBox="0 0 18 30" fill="none" aria-hidden="true">
              <rect x=".5" y=".5" width="17" height="29" rx="8" fill="#fff" stroke="#555" />
              <path d="M.500 14.500C5 12.500 13 12.500 17.500 14.500" stroke="#444" strokeWidth="1.300" />
              <path d="M9 1v12" stroke="#555" />
              <rect x="7.500" y="3" width="3" height="7" rx="1.500" fill="#fff" stroke="#444" />
            </svg>
          </MouseHint>
        </StatusField>
        <StatusField><Dot />Ingen enheter valgt.</StatusField>
        <StatusField><Dot /></StatusField>
      </StatusBar>

      <DialogLayer>
        <Dialog role="dialog" aria-label="Lag" onSubmit={(e) => e.preventDefault()}>
          <Field>
            <FieldLabel htmlFor="parent" $width={101}>Overordnet lag:</FieldLabel>
            <SelectBox>
              <Select id="parent" defaultValue=""><option value="" /></Select>
              <SelectArrows><Arrows /></SelectArrows>
            </SelectBox>
          </Field>
          <Field>
            <FieldLabel htmlFor="name" $width={101}>Lagnavn:</FieldLabel>
            <NameInput id="name" defaultValue="Senter" />
          </Field>
          <Attributes>
            <Legend>Attributter</Legend>
            <AttributeCard>
              <AttributeSelect id="color" label="Farge:" value="Rød" mark={<Swatch $fill="#f00000" />} />
              <AttributeSelect
                id="weight" label="Linjevekt:" value="0.25 mm (ISO)"
                mark={<svg width="16" height="10" viewBox="0 0 16 10"><path d="M0 5.500h16" stroke="#222" /></svg>}
              />
              <AttributeSelect id="linetype" label="Linjetype:" value="Kontinuerlig" />
              <CheckList>
                <CheckField label="Plottbar" />
                <CheckField label="Snappbar" />
              </CheckList>
            </AttributeCard>
          </Attributes>
          <DialogActions>
            <DialogButton type="button">Cancel</DialogButton>
            <DialogButton type="submit" $primary>OK</DialogButton>
          </DialogActions>
        </Dialog>
      </DialogLayer>
    </Shell>
  );
}
